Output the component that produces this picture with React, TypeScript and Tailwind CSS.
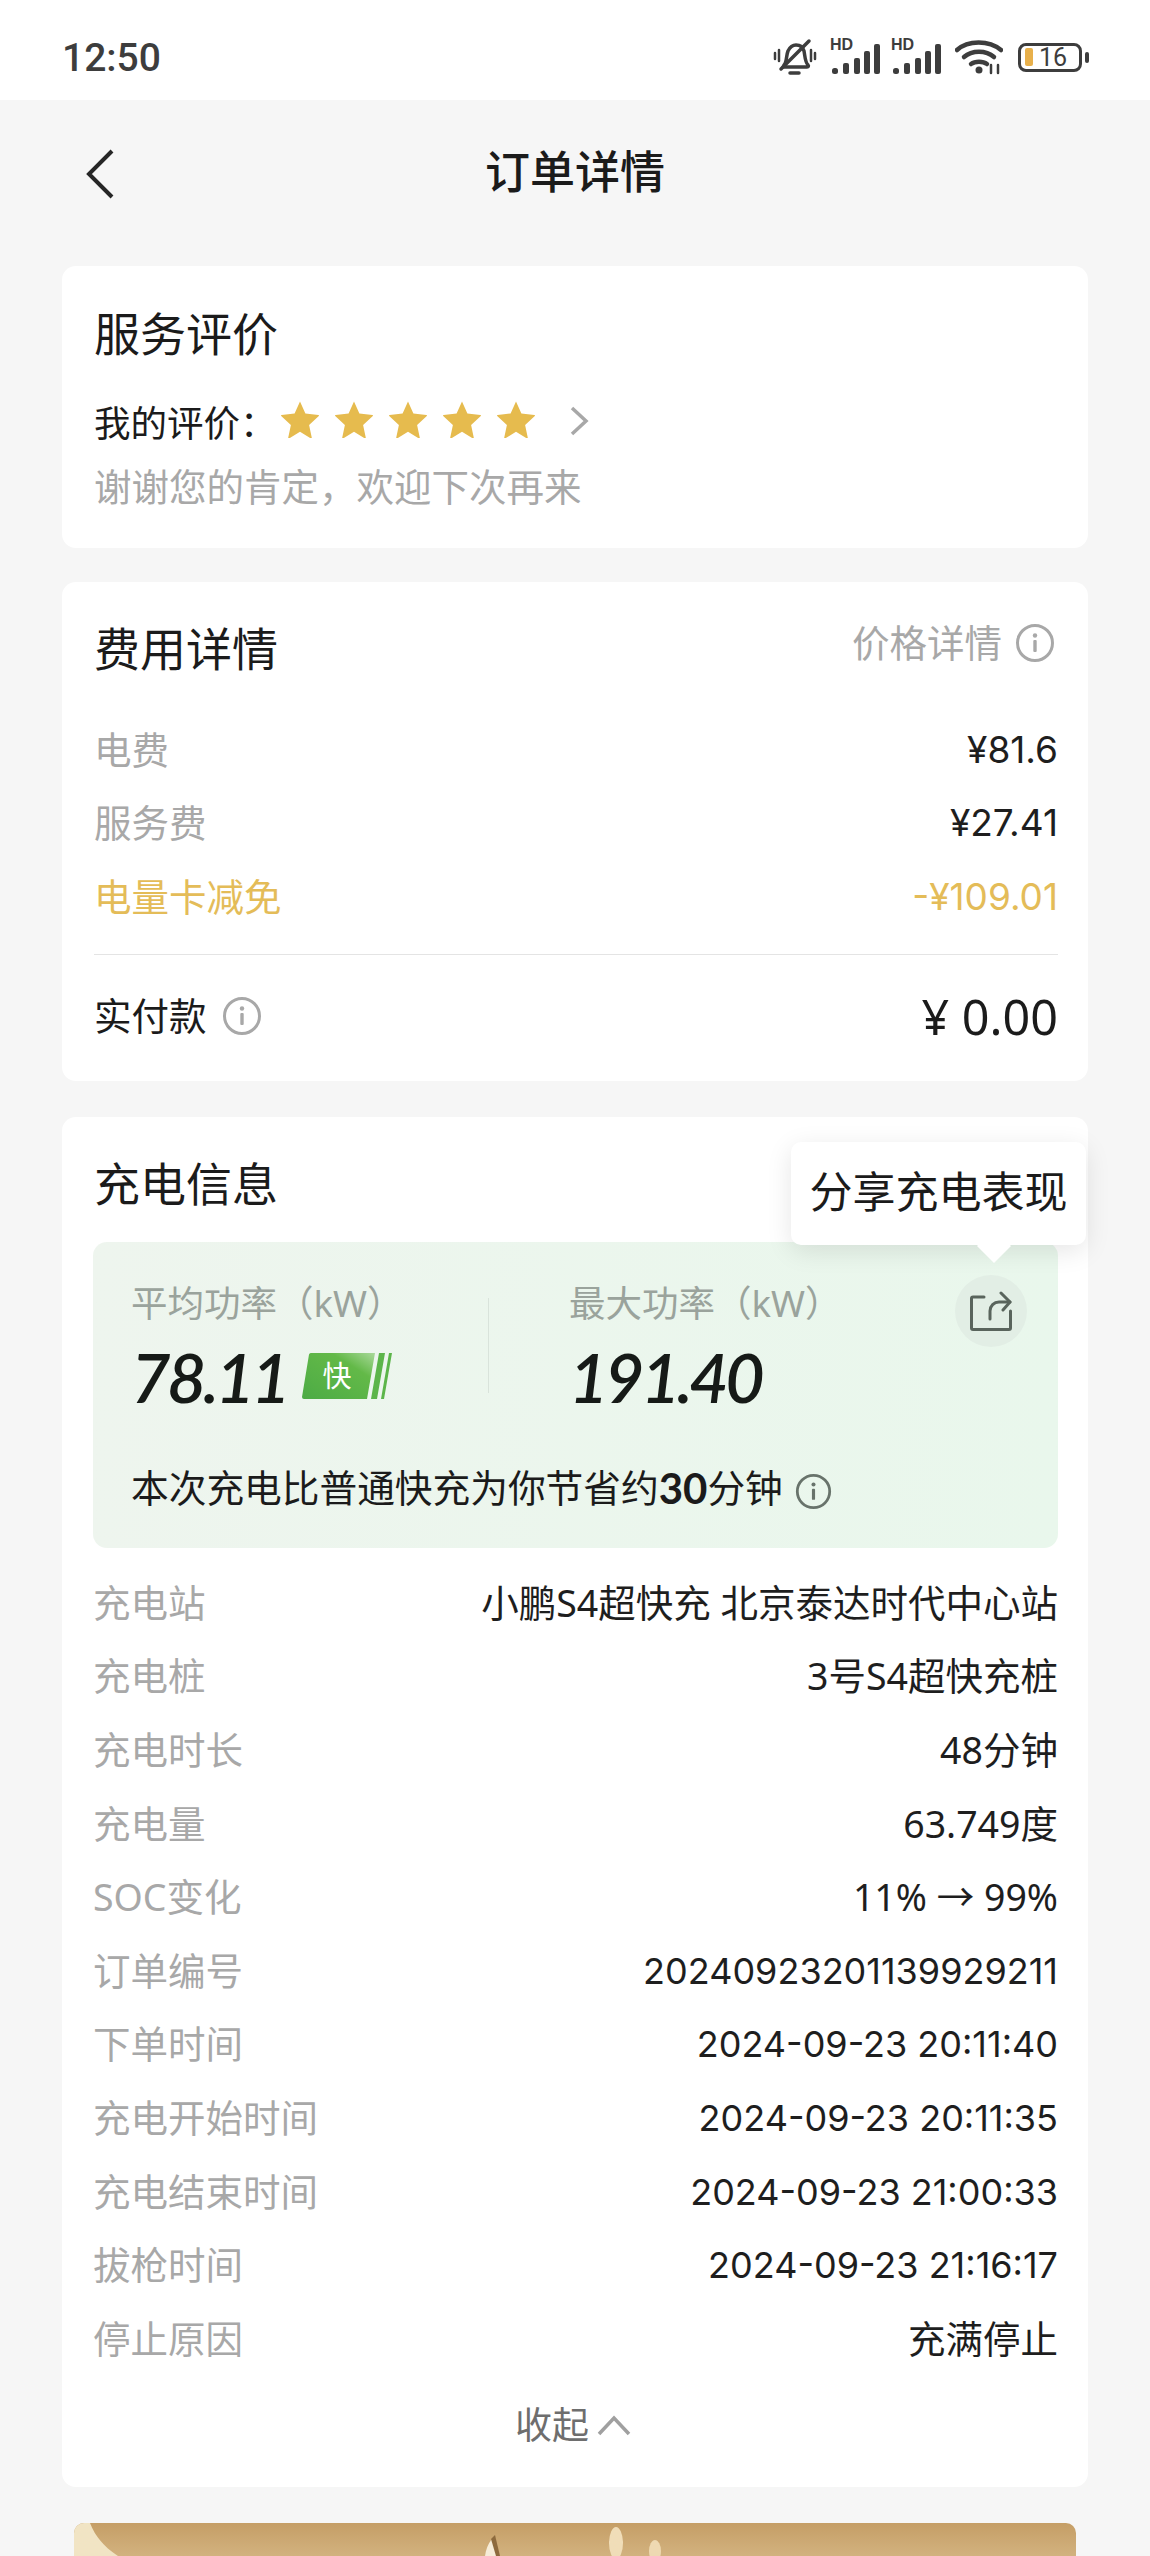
import React from "react";

const F = { sans: "[font-family:'Noto_Sans','Noto_Sans_CJK_SC',sans-serif]" };
const NUM = "[font-family:'Inter','Noto_Sans_CJK_SC',sans-serif] text-[36px]";
const PRICE = "[font-family:'Inter','Noto_Sans_CJK_SC',sans-serif] text-[37px]";

function Info({ className, color }: { className: string; color: string }) {
  return (
    <svg viewBox="0 0 40 40" className={className} fill="none">
      <circle cx="20" cy="20" r="17.5" stroke={color} strokeWidth="3" />
      <rect x="18.3" y="17" width="3.4" height="12" rx="1" fill={color} />
      <circle cx="20" cy="12.5" r="2.2" fill={color} />
    </svg>
  );
}

function Star() {
  return (
    <svg viewBox="0 0 40 38" className="w-[40px] h-[38px] shrink-0">
      <path
        d="M20 1.5l5.4 12 13 1.4c.6.1.8.8.4 1.200l-9.700 8.800 2.700 12.800c.1.600-.5 1-1 .700L20 31.800 9.200 38.400c-.5.300-1.100-.1-1-.700l2.700-12.800-9.700-8.800c-.4-.4-.2-1.100.4-1.200l13-1.400z"
        fill="#e6bb4e"
      />
    </svg>
  );
}

function Signal() {
  return (
    <div className="relative w-[50px] h-[32px] shrink-0">
      <span className="absolute left-0 top-[-6px] text-[16px] leading-[16px] font-bold text-[#3d3d3d] [font-family:'Liberation_Sans',sans-serif]">HD</span>
      <svg viewBox="0 0 50 32" className="w-[50px] h-[32px]">
        <g fill="#3d3d3d">
          <rect x="2" y="25" width="6" height="6" rx="2.500" />
          <rect x="13" y="20" width="6" height="11" rx="2" />
          <rect x="24" y="15" width="6" height="16" rx="2" />
          <rect x="34" y="8" width="6" height="23" rx="2" />
          <rect x="44" y="1" width="6" height="30" rx="2" />
        </g>
      </svg>
    </div>
  );
}

function StatusIcons() {
  return (
    <div className="flex items-center">
      <svg viewBox="0 0 44 38" className="w-[44px] h-[38px] mr-[13px]" fill="none" stroke="#3d3d3d">
        <path d="M11 27c3-3 2-9 4-14 2-4 5-6 8-6 4 0 7 2 8 6 1 5 1 11 4 14 .8 1 .5 2-1 2H10" strokeWidth="3.500" strokeLinecap="round" />
        <path d="M36 3L8 31" strokeWidth="3.500" strokeLinecap="round" />
        <path d="M2 15v6M42 15v6M6 12v11M38 12v11" strokeWidth="2.500" strokeLinecap="round" />
        <path d="M17 35h9" strokeWidth="3.500" strokeLinecap="round" />
      </svg>
      <div className="mr-[11px] mt-[4px]"><Signal /></div>
      <div className="mr-[14px] mt-[4px]"><Signal /></div>
      <svg viewBox="0 0 48 36" className="w-[48px] h-[36px] mr-[15px]" fill="none" stroke="#3d3d3d" strokeLinecap="round">
        <path d="M2 11C13 1 34 1 46 11" strokeWidth="4.500" />
        <path d="M9 18c8-7 22-7 30 0" strokeWidth="4.500" />
        <path d="M16 25c4-3 12-3 16 0" strokeWidth="4.500" />
        <circle cx="24" cy="31" r="3.500" fill="#3d3d3d" stroke="none" />
        <path d="M36 26v8M43 26v8" strokeWidth="2.500" />
      </svg>
      <div className="w-[64px] h-[29px] border-[3px] border-[#3d3d3d] rounded-[8px] flex items-center pl-[4px]">
        <div className="w-[8px] h-[18px] bg-[#e8b04b] rounded-[2px]" />
        <span className="ml-[6px] text-[25px] leading-none text-[#3d3d3d] [font-family:'Roboto',sans-serif]">16</span>
      </div>
      <div className="w-[4px] h-[11px] ml-[3px] bg-[#3d3d3d] rounded-full" />
    </div>
  );
}

function Row({ label, value, labelCls = "text-[#a8a8a8]", valueCls = "text-[#1e1e1e]" }: { label: string; value: string; labelCls?: string; valueCls?: string }) {
  return (
    <div className="flex justify-between items-center h-[73.6px] text-[37.5px] leading-[56px]">
      <span className={labelCls}>{label}</span>
      <span className={valueCls}>{value}</span>
    </div>
  );
}

const infoRows: [string, string, boolean][] = [
  ["充电站", "小鹏S4超快充 北京泰达时代中心站", false],
  ["充电桩", "3号S4超快充桩", false],
  ["充电时长", "48分钟", false],
  ["充电量", "63.749度", false],
  ["SOC变化", "11% → 99%", false],
  ["订单编号", "20240923201139929211", true],
  ["下单时间", "2024-09-23 20:11:40", true],
  ["充电开始时间", "2024-09-23 20:11:35", true],
  ["充电结束时间", "2024-09-23 21:00:33", true],
  ["拔枪时间", "2024-09-23 21:16:17", true],
  ["停止原因", "充满停止", false],
];

function Stat({ label, value, children }: { label: string; value: string; children?: React.ReactNode }) {
  return (
    <div>
      <div className="text-[36.5px] leading-[56px] text-[#9aa39c]">{label}</div>
      <div className="mt-[8px] flex items-center h-[76px]">
        <span className="text-[68px] leading-[76px] italic font-semibold tracking-[-3.5px] text-[#161a17] [font-family:'Lato',sans-serif]">{value}</span>
        {children}
      </div>
    </div>
  );
}

export default function App() {
  return (
    <div className={`${F.sans} w-[1150px] h-[2556px] overflow-hidden bg-[#f6f6f6] flex flex-col text-[#1b1b1b]`}>
      <div className="h-[100px] shrink-0 bg-white flex items-center justify-between pl-[62px] pr-[61px] pt-[14px]">
        <span className="mt-[3px] text-[39px] leading-none font-medium text-[#3d3d3d] [font-family:'Roboto',sans-serif]">12:50</span>
        <StatusIcons />
      </div>

      <div className="relative h-[146px] shrink-0 flex items-center justify-center pb-[3px]">
        <svg viewBox="0 0 32 50" className="absolute left-[84px] top-[49px] w-[32px] h-[50px]" fill="none" stroke="#262626" strokeWidth="4">
          <path d="M28 2L5 25l23 23" strokeLinejoin="miter" />
        </svg>
        <span className="text-[45px] leading-[60px] font-medium">订单详情</span>
      </div>

      <div className="mt-[20px] mx-[62px] h-[282px] shrink-0 bg-white rounded-[14px] pl-[32px] pr-[30px] pt-[37px]">
        <div className="text-[46px] leading-[60px]">服务评价</div>
        <div className="mt-[32px] flex items-center h-[56px] text-[36.5px] leading-[56px]">
          <span>我的评价：</span>
          <div className="flex gap-[14px] ml-[3px] mt-[-9px]">
            <Star /><Star /><Star /><Star /><Star />
          </div>
          <svg viewBox="0 0 20 30" className="w-[20px] h-[30px] ml-[33px] mt-[-4px]" fill="none" stroke="#a8a8a8" strokeWidth="3.500">
            <path d="M3 2l14 13L3 28" />
          </svg>
        </div>
        <div className="mt-[8px] text-[37.5px] leading-[56px] text-[#a8a8a8]">谢谢您的肯定，欢迎下次再来</div>
      </div>

      <div className="mt-[34px] mx-[62px] h-[499px] shrink-0 bg-white rounded-[14px] pl-[32px] pr-[30px] pt-[36px]">
        <div className="flex justify-between items-center h-[60px]">
          <span className="text-[46px] leading-[60px]">费用详情</span>
          <div className="flex items-center mt-[-10px]">
            <span className="text-[37.5px] leading-[56px] text-[#a8a8a8]">价格详情</span>
            <Info className="w-[40px] h-[40px] ml-[13px] mr-[3px]" color="#a8a8a8" />
          </div>
        </div>
        <div className="mt-[35px]">
          <Row label="电费" value="¥81.6" valueCls={`text-[#1e1e1e] ${PRICE}`} />
          <Row label="服务费" value="¥27.41" valueCls={`text-[#1e1e1e] ${PRICE}`} />
          <Row label="电量卡减免" value="-¥109.01" labelCls="text-[#e4bc58]" valueCls={`text-[#e4bc58] ${PRICE}`} />
        </div>
        <div className="mt-[20px] h-[1px] bg-[#e4e4e4]" />
        <div className="mt-[31px] flex justify-between items-center h-[60px]">
          <div className="flex items-center">
            <span className="text-[37.5px] leading-[56px]">实付款</span>
            <Info className="w-[40px] h-[40px] ml-[15px]" color="#a8a8a8" />
          </div>
          <span className="text-[48.5px] leading-[60px]">¥ 0.00</span>
        </div>
      </div>

      <div className="relative mt-[36px] mx-[62px] h-[1370px] shrink-0 bg-white rounded-[14px] pl-[31px] pr-[30px] pt-[36px]">
        <div className="text-[46px] leading-[60px] pl-[1px]">充电信息</div>

        <div className="mt-[29px] h-[306px] rounded-[14px] bg-gradient-to-r from-[#eef5ee] to-[#e9f7ec] pl-[38px] pr-[31px] pt-[33px]">
          <div className="flex">
            <div className="w-[357px] shrink-0">
              <Stat label="平均功率（kW）" value="78.11">
                <svg viewBox="0 0 90 46" className="w-[90px] h-[46px] ml-[15px] mt-[-2px]">
                  <defs>
                    <linearGradient id="bd" x1="0" y1="1" x2="1" y2="0">
                      <stop offset="0" stopColor="#4cab45" />
                      <stop offset="0.7" stopColor="#63b948" />
                      <stop offset="1" stopColor="#a9d99a" />
                    </linearGradient>
                  </defs>
                  <path d="M7 1.500a2 2 0 0 1 2-1.500h64l-8 46H2a2 2 0 0 1-2-2z" fill="url(#bd)" />
                  <path d="M77 0h6l-8 46h-6zM87 0h3l-8 46h-3z" fill="#5cb54a" />
                  <text x="35" y="34" fontSize="29" fill="#ffffff" textAnchor="middle" fontFamily="Noto Sans CJK SC">快</text>
                </svg>
              </Stat>
            </div>
            <div className="w-[1px] h-[95px] mt-[23px] bg-[#d9e3db] shrink-0" />
            <div className="ml-[80px]">
              <Stat label="最大功率（kW）" value="191.40" />
            </div>
            <div className="ml-auto w-[72px] h-[72px] rounded-full bg-[#e2eee5] flex items-center justify-center shrink-0">
              <svg viewBox="0 0 42 40" className="w-[42px] h-[40px]" fill="none" stroke="#59645c" strokeWidth="3" strokeLinecap="round" strokeLinejoin="round">
                <path d="M14 6H3a1.500 1.500 0 0 0-1.500 1.500V37A1.500 1.500 0 0 0 3 38.500h36A1.500 1.500 0 0 0 40.500 37V20" />
                <path d="M20 28v-8c0-5 4-9 9-9h11" />
                <path d="M31 2l9 9-7 8" />
              </svg>
            </div>
          </div>
          <div className="mt-[45px] flex items-center text-[37.7px] leading-[56px]">
            <span>本次充电比普通快充为你节省约</span>
            <span className="font-bold text-[42px] [font-family:'Lato',sans-serif]">30</span>
            <span>分钟</span>
            <Info className="w-[37px] h-[37px] ml-[12px] mt-[6px]" color="#68736b" />
          </div>
        </div>

        <div className="mt-[18px]">
          {infoRows.map(([l, v, n]) => (
            <Row key={l} label={l} value={v} valueCls={n ? `text-[#1e1e1e] ${NUM}` : "text-[#1e1e1e]"} />
          ))}
        </div>

        <div className="mt-[19px] h-[60px] flex items-center justify-center pr-[5px]">
          <span className="text-[37px] leading-[56px] text-[#6e6e6e]">收起</span>
          <svg viewBox="0 0 34 22" className="w-[34px] h-[22px] ml-[8px]" fill="none" stroke="#a0a0a0" strokeWidth="3.500">
            <path d="M2 20L17 4l15 16" />
          </svg>
        </div>

        <div className="absolute right-[2px] top-[25px] w-[295px] h-[103px] bg-white rounded-[10px] shadow-[0_6px_26px_rgba(0,0,0,0.10)] flex items-center justify-center text-[43px] leading-[60px] pb-[3px]">
          分享充电表现
          <div className="absolute left-[191px] top-[92px] w-[24px] h-[24px] bg-white rotate-45" />
        </div>
      </div>

      <div className="relative mt-[36px] mx-[74px] flex-1 rounded-t-[10px] overflow-hidden bg-gradient-to-b from-[#c59e66] to-[#d2b27f]">
        <svg viewBox="0 0 1003 33" className="w-[1003px] h-[33px] block" fill="none">
          <path d="M0 0h16c5 13 14 24 28 33H0z" fill="#f1e4c4" />
          <path d="M411 33c1-8 4-14 8-18 3 5 5 11 5 18z" fill="#f6ecd8" />
          <path d="M417 16l4-4 5 21h-4z" fill="#8d6a3d" />
          <ellipse cx="542" cy="20" rx="7" ry="16" fill="#f0ddb8" />
          <ellipse cx="581" cy="28" rx="6" ry="11" fill="#eed9b2" />
        </svg>
      </div>
    </div>
  );
}
